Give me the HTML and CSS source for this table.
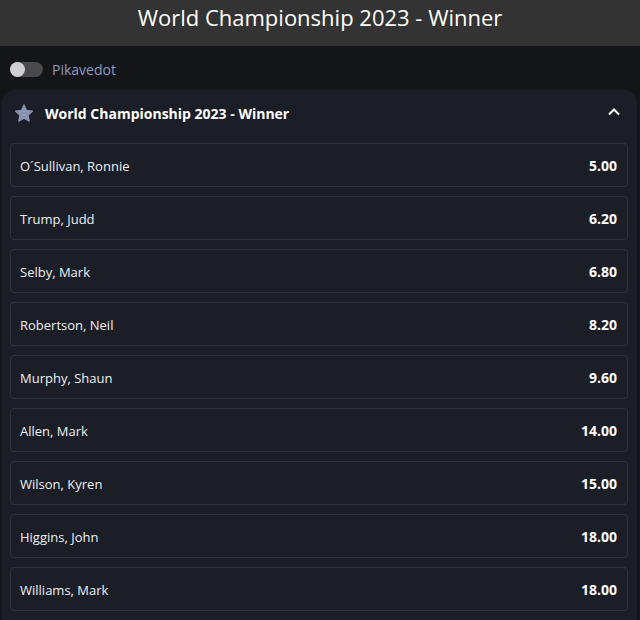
FILE: index.html
```html
<!DOCTYPE html>
<html lang="fi">
<head>
<meta charset="utf-8">
<title>World Championship 2023 - Winner</title>
<link rel="stylesheet" href="styles.css">
</head>
<body>
<header class="topbar"><h1 class="topbar-title">World Championship 2023 - Winner</h1></header>
<div class="toggle-row">
  <span class="toggle"><span class="knob"></span></span>
  <span class="toggle-label">Pikavedot</span>
</div>
<section class="card">
  <div class="card-head">
    <svg class="star" width="20" height="19" viewBox="0 0 24 23"><path d="M12 1.2l3.1 6.6 7.2.9-5.3 5 1.4 7.1L12 17.3l-6.4 3.5 1.4-7.1-5.3-5 7.2-.9z" fill="#8a94ae" stroke="#8a94ae" stroke-width="1.4" stroke-linejoin="round"/></svg>
    <span class="card-title">World Championship 2023 - Winner</span>
    <svg class="chev" width="14" height="10" viewBox="0 0 14 10"><path d="M2 7.5L7 2.5l5 5" fill="none" stroke="#fff" stroke-width="2"/></svg>
  </div>
  <div class="rows">
    <div class="row"><span class="name">O´Sullivan, Ronnie</span><span class="odds">5.00</span></div>
    <div class="row"><span class="name">Trump, Judd</span><span class="odds">6.20</span></div>
    <div class="row"><span class="name">Selby, Mark</span><span class="odds">6.80</span></div>
    <div class="row"><span class="name">Robertson, Neil</span><span class="odds">8.20</span></div>
    <div class="row"><span class="name">Murphy, Shaun</span><span class="odds">9.60</span></div>
    <div class="row"><span class="name">Allen, Mark</span><span class="odds">14.00</span></div>
    <div class="row"><span class="name">Wilson, Kyren</span><span class="odds">15.00</span></div>
    <div class="row"><span class="name">Higgins, John</span><span class="odds">18.00</span></div>
    <div class="row"><span class="name">Williams, Mark</span><span class="odds">18.00</span></div>
  </div>
</section>
</body>
</html>
```
FILE: styles.css
```css
html, body { margin: 0; padding: 0; }
body {
  background: #141519;
  font-family: "Open Sans", "Noto Sans", sans-serif;
  color: #fff;
  height: 620px;
  overflow: hidden;
}
.topbar {
  height: 46px;
  background: #333333;
  display: flex;
  align-items: center;
  justify-content: center;
}
.topbar-title {
  margin: 0;
  font-weight: 400;
  font-size: 22px;
  line-height: 30px;
  padding-bottom: 12px;
  color: #fff;
}
.toggle-row {
  display: flex;
  align-items: center;
  height: 42px;
  margin-top: 2px;
  padding-left: 10px;
  gap: 9px;
}
.toggle {
  width: 33px;
  height: 15px;
  border-radius: 8px;
  background: #4a4a4c;
  display: flex;
  align-items: center;
}
.knob {
  width: 15px;
  height: 15px;
  border-radius: 50%;
  background: #cfcfd2;
}
.toggle-label {
  font-size: 14px;
  color: #8b9bbd;
}
.card {
  margin: 0 3px 0 2px;
  background: #1b1e26;
  border-radius: 12px 12px 0 0;
  padding-bottom: 20px;
}
.card-head {
  display: flex;
  align-items: center;
  height: 46px;
  padding: 0 16px 0 12px;
}
.star { margin-top: 1px; }
.card-title {
  margin-left: 11px;
  font-size: 14px;
  font-weight: 700;
  flex: 1;
}
.chev { margin-top: -2px; }
.rows {
  display: flex;
  flex-direction: column;
  gap: 9px;
  padding: 7px 9px 0 8px;
}
.row {
  height: 41px;
  border: 1px solid #2e323c;
  border-radius: 4px;
  display: flex;
  align-items: center;
  justify-content: space-between;
  padding: 1px 10px 0 9px;
  box-sizing: content-box;
  font-size: 13px;
}
.name { color: #eef0f4; }
.odds { font-weight: 700; font-size: 14px; }
```
